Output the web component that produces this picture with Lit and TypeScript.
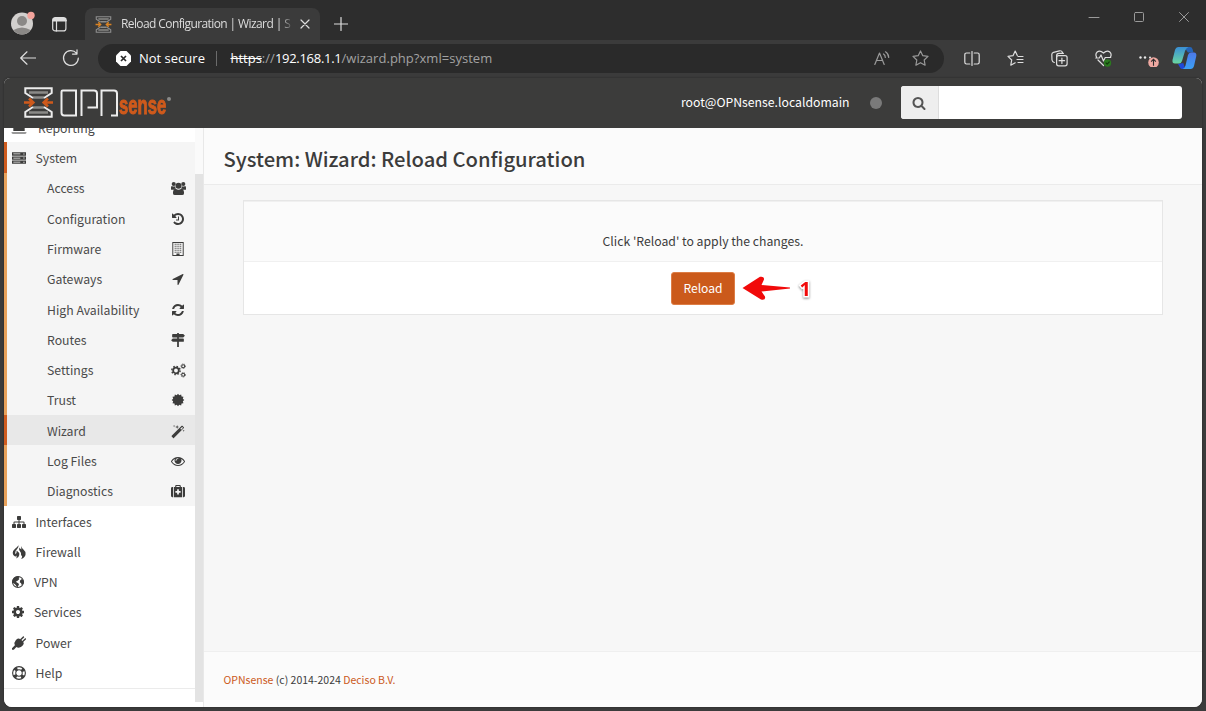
import { LitElement, html, css, svg, TemplateResult } from "lit";
import { customElement, property } from "lit/decorators.js";

const gear = (cx: number, cy: number, r: number, w: number, n: number) => {
  const R = r + w * 0.75;
  const on = (2 * Math.PI * (r + w)) / n / 2.3;
  return svg`<circle cx=${cx} cy=${cy} r=${r} fill="none" stroke="currentColor" stroke-width=${w}/>
  <circle cx=${cx} cy=${cy} r=${R} fill="none" stroke="currentColor" stroke-width=${w * 0.8} stroke-dasharray=${`${on} ${(2 * Math.PI * R) / n - on}`}/>`;
};
const burst = (n: number, R: number, r: number) =>
  Array.from({ length: n * 2 }, (_, i) => {
    const a = (i * Math.PI) / n;
    const q = i % 2 ? r : R;
    return `${(8 + q * Math.sin(a)).toFixed(2)},${(8 - q * Math.cos(a)).toFixed(2)}`;
  }).join(" ");

const fa = (d: string) => svg`<path transform="scale(.0089286)" d=${d}/>`;

const GLYPHS: Record<string, TemplateResult> = {
  search: fa("M1216 832q0-185-131.5-316.5t-316.5-131.5-316.5 131.5-131.5 316.5 131.5 316.5 316.5 131.5 316.5-131.5 131.5-316.5zm512 832q0 52-38 90t-90 38q-54 0-90-38l-343-342q-179 124-399 124-143 0-273.5-55.5t-225-150-150-225-55.5-273.5 55.5-273.5 150-225 225-150 273.5-55.5 273.5 55.5 225 150 150 225 55.5 273.5q0 220-124 399l343 343q37 37 37 90z"),
  refresh: fa("M1639 1056q0 5-1 7-64 268-268 434.5t-478 166.5q-146 0-282.5-55t-243.5-157l-129 129q-19 19-45 19t-45-19-19-45v-448q0-26 19-45t45-19h448q26 0 45 19t19 45-19 45l-137 137q71 66 161 102t187 36q134 0 250-65t186-179q11-17 53-117 8-23 30-23h192q13 0 22.5 9.5t9.5 22.5zm25-800v448q0 26-19 45t-45 19h-448q-26 0-45-19t-19-45 19-45l138-138q-148-137-349-137-134 0-250 65t-186 179q-11 17-53 117-8 23-30 23h-199q-13 0-22.5-9.5t-9.5-22.5v-7q65-268 270-434.5t480-166.5q146 0 284 55.5t245 156.5l130-129q19-19 45-19t45 19 19 45z"),
  history: fa("M1664 896q0 156-61 298t-164 245-245 164-298 61q-172 0-327-72.5t-264-204.5q-7-10-6.5-22.5t8.5-20.5l137-138q10-9 25-9 16 2 23 12 73 95 179 147t225 52q104 0 198.5-40.5t163.5-109.5 109.5-163.5 40.5-198.5-40.5-198.5-109.5-163.5-163.5-109.5-198.5-40.5q-98 0-188 35.5t-160 101.5l137 138q31 30 14 69-17 40-59 40h-448q-26 0-45-19t-19-45v-448q0-42 40-59 39-17 69 14l130 129q107-101 244.5-156.5t284.5-55.5q156 0 298 61t245 164 164 245 61 298zm-640-288v448q0 14-9 23t-23 9h-320q-14 0-23-9t-9-23v-64q0-14 9-23t23-9h224v-352q0-14 9-23t23-9h64q14 0 23 9t9 23z"),
  arrow: fa("M1593 349l-640 1280q-17 35-57 35-5 0-15-2-22-5-35.5-22.5t-13.5-39.5v-576h-576q-22 0-39.5-13.5t-22.5-35.5 4-42 29-30l1280-640q13-7 29-7 27 0 45 19 15 14 18.5 34.5t-6.5 39.5z"),
  cog: fa("M1152 896q0-106-75-181t-181-75-181 75-75 181 75 181 181 75 181-75 75-181zm512-109v222q0 12-8 23t-20 13l-185 28q-19 54-39 91 35 50 107 138 10 12 10 25t-9 23q-27 37-99 108t-94 71q-12 0-26-9l-138-108q-44 23-91 38-16 136-29 186-7 28-36 28h-222q-14 0-24.5-8.500t-11.500-21.500l-28-184q-49-16-90-37l-141 107q-10 9-25 9-14 0-25-11-126-114-165-168-7-10-7-23 0-12 8-23 15-21 51-66.500t54-70.500q-27-50-41-99l-183-27q-13-2-21-12.500t-8-23.500v-222q0-12 8-23t19-13l186-28q14-46 39-92-40-57-107-138-10-12-10-24 0-10 9-23 26-36 98.500-107.500t94.500-71.500q13 0 26 10l138 107q44-23 91-38 16-136 29-186 7-28 36-28h222q14 0 24.500 8.500t11.500 21.500l28 184q49 16 90 37l142-107q9-9 24-9 13 0 25 10 129 119 165 170 7 8 7 22 0 12-8 23-15 21-51 66.500t-54 70.500q26 50 41 98l183 28q13 2 21 12.500t8 23.500z"),
  eye: fa("M1664 960q-152-236-381-353 61 104 61 225 0 185-131.5 316.5t-316.5 131.5-316.5-131.5-131.5-316.5q0-121 61-225-229 117-381 353 133 205 333.5 326.5t434.500 121.500 434.500-121.500 333.500-326.500zm-720-384q0-20-14-34t-34-14q-125 0-214.500 89.500t-89.500 214.500q0 20 14 34t34 14 34-14 14-34q0-86 61-147t147-61q20 0 34-14t14-34zm848 384q0 34-20 69-140 230-376.500 368.500t-499.500 138.500-499.500-139-376.500-368q-20-35-20-69t20-69q140-229 376.500-368t499.500-139 499.500 139 376.500 368q20 35 20 69z"),
  sitemap: fa("M1792 1248v320q0 40-28 68t-68 28h-320q-40 0-68-28t-28-68v-320q0-40 28-68t68-28h96v-192h-512v192h96q40 0 68 28t28 68v320q0 40-28 68t-68 28h-320q-40 0-68-28t-28-68v-320q0-40 28-68t68-28h96v-192h-512v192h96q40 0 68 28t28 68v320q0 40-28 68t-68 28h-320q-40 0-68-28t-28-68v-320q0-40 28-68t68-28h96v-192q0-52 38-90t90-38h512v-192h-96q-40 0-68-28t-28-68v-320q0-40 28-68t68-28h320q40 0 68 28t28 68v320q0 40-28 68t-68 28h-96v192h512q52 0 90 38t38 90v192h96q40 0 68 28t28 68z"),
  laptop: svg`<path d="M2.500 2h11a1 1 0 0 1 1 1v8.500h-13V3a1 1 0 0 1 1-1z"/><path d="M-.5 12.500h17v1q0 1.300-1.500 1.300H1q-1.500 0-1.500-1.300z" fill="#999"/>`,
  server: svg`<path fill-rule="evenodd" d="M0 1.500h16v3.800H0zM0 6.200h16v3.800H0zM0 10.900h16v3.800H0zM1.500 2.900v.9h8v-.9zM1.500 7.600v.9h8v-.9zM1.500 12.300v.9h8v-.9zM13 2.800v1.100h1.300V2.800zM13 7.500v1.100h1.300V7.500zM13 12.200v1.100h1.300v-1.100z"/>`,
  users: svg`<circle cx="2.900" cy="3.200" r="2.200"/><circle cx="13.100" cy="3.200" r="2.200"/><circle cx="8" cy="5" r="3.200"/><path d="M0 9V7.200Q0 5.200 1.300 5.500q1.600.8 3 .2Q4.600 7.200 5.200 8q-1.400 0-2.300 1.400H1Q0 9.400 0 9zM16 9V7.200q0-2-1.300-1.700-1.600.8-3 .2-.3 1.500-.9 2.300 1.400 0 2.300 1.400H15q1 0 1-.4zM2.100 13q0-4.500 2.900-4.700Q8 10.500 11 8.300q2.900.2 2.900 4.700 0 2-2.100 2H4.200Q2.100 15 2.100 13z"/>`,
  building: svg`<path fill-rule="evenodd" d="M1.500 0h13v16h-13zM2.600 1.100v13.800h3.600V13h3.600v1.900h3.600V1.100z"/><path d="M4.200 2.600h8M4.200 4.900h8M4.200 7.200h8M4.200 9.500h8M4.200 11.800h8" stroke="currentColor" stroke-width="1.200" stroke-dasharray="1.200 .9"/>`,
  signs: svg`<path d="M7 0h2v1.200h5l1.900 1.900L14 5H2.200q-.9 0-.9-.8V2q0-.8.900-.8H7zM7 5h2v1.300h4.800q.9 0 .9.800v2.200q0 .8-.9.800H2L.1 8.200 2 6.300h5zM7 10h2v6H7z"/>`,
  cogs: svg`${gear(5.300, 8, 3, 1.900, 8)}${gear(13, 3.400, 1.600, 1.100, 7)}${gear(13, 12.600, 1.600, 1.100, 7)}`,
  cert: svg`<polygon points=${burst(12, 7.200, 5.700)}/>`,
  magic: svg`<path fill-rule="evenodd" d="M.8 13.500 12.200 2.100q.4-.4.9 0l1.600 1.600q.4.400 0 .9L3.300 16q-.4.400-.9 0L.8 14.400q-.4-.4 0-.9zM10.600 5.400l1.100 1.100 2.100-2.100-1.100-1.100z"/><path d="M3.500 1l.3 1 1 .3-1 .3-.3 1-.3-1-1-.3 1-.3zM7 1.200l.5 1.700 1.700.5-1.700.5L7 5.600l-.5-1.700-1.700-.5 1.700-.5zM14.500 6.500l.3 1 1 .3-1 .3-.3 1-.3-1-1-.3 1-.3z"/>`,
  medkit: svg`<path fill-rule="evenodd" d="M3.200 3.500h1.600V2.300Q4.800 1 6 1h4q1.200 0 1.200 1.300v1.200h1.600v11.500H3.200zM6.100 2.300v1.200h3.800V2.300zM7 6v2H5v2h2v2h2v-2h2V8H9V6zM0 5q0-1.500 1.500-1.500h.8v11.500h-.8Q0 15 0 13.500zM16 5q0-1.500-1.500-1.500h-.8v11.500h.8q1.500 0 1.500-1.500z"/>`,
  fire: svg`<path d="M7.300.3C8 3.300 5 4.900 4 7.300Q3.300 9 4 10.500 5.600 9 5.300 6.200 8.600 8.200 8.300 11.500 8 14.200 4.800 15.300q1-1.800.2-3.300l-1.200 1.500Q.8 12.300.8 9.200.8 6.500 3.500 4.300 6.300 2.500 7.300.3zM10.500 1.200q.2 2 2.300 3.600Q15.800 7.200 15.500 10.600 15.200 14.400 10.500 16q1.600-2.300.9-4.500l-1 1.300Q10.800 8 8.200 5.600 8 4 8.600 2.800q.8 1.600 2.300 2.400-.8-2-.4-4z"/>`,
  globe: svg`<circle cx="8" cy="8" r="6.300" fill="none" stroke="currentColor" stroke-width="1.200"/><path d="M1.500 6Q3.500 1.500 8 1.300l2.200.9-1.500 1.300.9 1.200L7.500 6.500 5.500 7.800l1.800 1.100 1.900 1.300-.8 2-1.400 2.300Q6 12 4.800 10.800 3.500 9.500 1.800 9zM10.500 6l2-1.500 1.900 1.800.2 3-2.200 2.500-.9-2.400-1.500-1.200z"/>`,
  plug: svg`<path d="M9.700 3.700 12.900.5q1.300-.4 1.500.9L11.200 4.700l1 1 3.200-3.200q1.300-.2 1.100 1.100L13.200 6.900q1.800 1.900-1.400 4.700-3.100 2.700-6.400 1.100L2.500 15.800H.4v-1.900l3.300-3.300Q2.300 7.300 4.900 4.500 8 1.800 9.700 3.700z" transform="translate(-.4 0)"/>`,
  ring: svg`<circle cx="8" cy="8" r="7.300" fill="none" stroke="currentColor" stroke-width="1.300"/><circle cx="8" cy="8" r="3.700" fill="none" stroke="currentColor" stroke-width="1.200"/><circle cx="8" cy="8" r="5.400" fill="none" stroke="currentColor" stroke-width="3.600" stroke-dasharray="3.400 5.082" stroke-dashoffset="-2.540"/>`,
};

@customElement("fa-icon")
class FaIcon extends LitElement {
  @property() name = "";
  @property({ type: Number }) size = 14;
  static styles = css`
    :host { display: inline-flex; }
    .g { fill: currentColor; overflow: visible; }
  `;
  render() {
    return html`<svg class="g" width=${this.size} height=${this.size} viewBox="0 0 16 16">${GLYPHS[this.name]}</svg>`;
  }
}

/* Hourglass mark shared by the favicon and the header logo. */
const mark = (w: number, h: number, line = "#ececec", accent = "#cf5a1c") => html`<svg width=${w} height=${h} viewBox="0 0 29 31">
  <path d="M5 5.500h19M9 10.500h11M9 20.500h11M5 25.500h19" stroke="#8a8a88" stroke-width="2.600" fill="none"/>
  <path d="M9 11L1.300 6V1.300h26.400V6L20 11M9 20L1.300 25v4.700h26.400V25L20 20" fill="none" stroke=${line} stroke-width="2"/>
  <path d="M0 15.500h8.500M5 11.500l4.300 4L5 19.500M29 15.500h-8.500M24 11.500l-4.300 4 4.300 4" fill="none" stroke=${accent} stroke-width="2.600"/>
</svg>`;

@customElement("browser-chrome")
class BrowserChrome extends LitElement {
  static styles = css`
    :host { display: block; height: 78px; background: #2d2d2d; color: #e6e6e6; font-family: "Open Sans", sans-serif; }
    svg { display: block; flex: none; }
    .tabs { height: 40px; display: flex; align-items: flex-end; }
    .avatar { margin: 0 0 4px 10px; }
    .workspace { margin: 0 0 8.500px 16px; }
    .tab { margin-left: 18px; width: 235px; height: 32px; box-sizing: border-box; padding-left: 10px; background: #3b3b3b; border-radius: 8px 8px 0 0; display: flex; align-items: center; }
    .title { margin-left: 9px; width: 171px; overflow: hidden; white-space: nowrap; font-size: 12px; letter-spacing: -0.600px; padding-bottom: 2px; color: #dcdcdc; mask-image: linear-gradient(90deg, #000 93%, transparent 101%); }
    .close { margin-left: 7.500px; }
    .plus { margin: 0 0 9.500px 14px; }
    .controls { margin: 0 16px 18.500px auto; display: flex; gap: 33px; }
    .bar { height: 38px; background: #3b3b3b; display: flex; align-items: center; box-sizing: border-box; padding-bottom: 2px; }
    .back { margin-left: 20px; }
    .reload { margin-left: 26px; }
    .address { margin-left: 18px; width: 846px; height: 29px; margin-top: 1px; border-radius: 15px; background: #2a2a2a; display: flex; align-items: center; font-size: 13px; line-height: 27px; box-sizing: border-box; padding-bottom: 1px; }
    .warn { margin-left: 18px; }
    .label { margin-left: 8px; color: #fff; letter-spacing: 0; }
    .sep { width: 1px; height: 15px; background: #6b6b6b; margin: 0 13px 0 11.500px; }
    .url { color: #a2a2a2; white-space: nowrap; letter-spacing: .030px; }
    .strike { color: #fff; text-decoration: line-through; letter-spacing: 0; }
    .host { color: #fff; letter-spacing: -0.280px; }
    .read { margin-left: auto; }
    .star { margin: 0 15.500px 0 22px; }
    .tools { display: flex; align-items: center; margin-left: 19.500px; gap: 27px; }
    .copilot { margin-left: 12.500px; }
    .ico { fill: none; stroke: #dedede; stroke-width: 1.200; stroke-linejoin: round; stroke-linecap: round; }
    .dim { stroke: #9a9a9a; }
  `;
  render() {
    return html`
      <div class="tabs">
        <svg class="avatar" width="26" height="26" viewBox="0 0 26 26"><circle cx="12" cy="13.500" r="11" fill="#d2d0ce"/><circle cx="12" cy="11" r="5" fill="#8a8886"/><path d="M3.500 20q8.500-5 17 0Q17 24.500 12 24.500T3.500 20z" fill="#8a8886"/><circle cx="21" cy="5.500" r="3.700" fill="#f3a39b"/></svg>
        <svg class="workspace ico" width="15" height="15" viewBox="0 0 15 15"><rect x=".7" y=".7" width="13.200" height="13.200" rx="2.500"/><path d="M1.500 2h12M1 3.500h13" stroke-width="1.800"/><path d="M4.500 4v10"/></svg>
        <div class="tab">
          ${mark(17, 17, "#8f8f8f", "#d98324")}
          <span class="title">Reload Configuration | Wizard | S</span>
          <svg class="close ico" width="10" height="10" viewBox="0 0 10 10"><path d="M1 1l8 8M9 1L1 9"/></svg>
        </div>
        <svg class="plus ico" width="14" height="14" viewBox="0 0 14 14"><path d="M7 .5v13M.5 7h13"/></svg>
        <div class="controls">
          <svg class="ico dim" width="12" height="12" viewBox="0 0 12 12"><path d="M1 7.500h10" stroke-width="1"/></svg>
          <svg class="ico dim" width="12" height="12" viewBox="0 0 12 12"><rect x="1.500" y="2.500" width="9" height="9" rx="1" stroke-width="1"/></svg>
          <svg class="ico dim" width="12" height="12" viewBox="0 0 12 12"><path d="M1.500 2.500l9 9M10.500 2.500l-9 9" stroke-width="1"/></svg>
        </div>
      </div>
      <div class="bar">
        <svg class="back ico" width="16" height="14" viewBox="0 0 16 14"><path d="M15.500 7H.8M7 .8L.7 7 7 13.200"/></svg>
        <svg class="reload ico" width="18" height="18" viewBox="0 0 18 18"><path d="M16.300 9A7.400 7.400 0 1 1 14.600 4.300M15 .8v4.300h-4.500"/></svg>
        <div class="address">
          <svg class="warn" width="15" height="15" viewBox="0 0 15 15"><path d="M4.500 0h6L15 4.500v6L10.500 15h-6L0 10.500v-6z" fill="#fff"/><path d="M5 5l5 5M10 5l-5 5" stroke="#2a2a2a" stroke-width="1.700"/></svg>
          <span class="label">Not secure</span><span class="sep"></span>
          <span class="url"><span class="strike">https</span>://<span class="host">192.168.1.1</span>/wizard.php?xml=system</span>
          <svg class="read ico dim" width="16" height="15" viewBox="0 0 16 15"><path d="M.8 13.500L5.500 2l4.700 11.500M2.500 9.500h6M9.500 3q1.800 1 1.800 3.500M11.500.8q3.200 2 3.200 5.700"/></svg>
          <svg class="star ico dim" width="17" height="16" viewBox="0 0 17 16"><path d="M8.500 1l2.300 4.700 5.200.7-3.800 3.600.9 5.200-4.600-2.500-4.600 2.500.9-5.200L1 6.400l5.200-.7z"/></svg>
        </div>
        <div class="tools">
          <svg class="ico" width="16" height="15" viewBox="0 0 16 15"><path d="M5.800 2H2.500Q.8 2 .8 3.700v7.600Q.8 13 2.500 13h3.300M10.200 2h3.300q1.700 0 1.700 1.700v7.600q0 1.700-1.700 1.700h-3.300M8 .5v14"/></svg>
          <svg class="ico" width="17" height="16" viewBox="0 0 17 16"><path d="M10.300 5.500L8.200 1 6 5.700 1 6.400l3.700 3.600-.9 5.200 4.400-2.400M11 6.500h5M10 9.500h6M11 12.500h5"/></svg>
          <svg class="ico" width="17" height="17" viewBox="0 0 17 17"><rect x="5.600" y="5.600" width="10.500" height="10.200" rx="2"/><path d="M10.900 8v5.500M8.100 10.700h5.500M3.300 12.500Q1.300 12 1 10L.8 4.500Q.8 2.700 2.500 2.300L8.500.8q2.300-.3 3 1.700M5.600 10V5.800Q5.600 3.300 8 3.300h4.500"/></svg>
          <svg class="ico" width="17" height="17" viewBox="0 0 17 17"><path d="M1.500 7Q0 4 2.200 2 5-.2 8.500 3 12-.2 14.800 2 17 4 15.500 7M3 10l5.500 5.500M.8 8h3.500l1.700-3 2.500 6 1.700-3.500h5.500"/><circle cx="12.500" cy="13" r="3.700" fill="#2b7a1f" stroke="none"/><path d="M11 13l1.200 1.200 2-2.200" stroke="#123c0d"/></svg>
          <svg width="21" height="18" viewBox="0 0 21 18"><g fill="#e8e8e8"><circle cx="1.500" cy="8.500" r="1.200"/><circle cx="6" cy="8.500" r="1.200"/><circle cx="11" cy="8.500" r="1"/></g><circle cx="14.500" cy="13.500" r="5.300" fill="#efa9a2"/><path d="M14.500 16.700v-6.200M12.100 12.700l2.400-2.400 2.400 2.400" fill="none" stroke="#2d2d2d" stroke-width="1.100"/></svg>
        </div>
        <svg class="copilot" width="25" height="24" viewBox="0 0 25 24">
          <defs><linearGradient id="a" x1="0" y1="0" x2="0" y2="1"><stop offset="0" stop-color="#3a8fd6"/><stop offset="1" stop-color="#6ad6a0"/></linearGradient><linearGradient id="b" x1="0" y1="1" x2="0" y2="0"><stop offset="0" stop-color="#3ba0f5"/><stop offset="1" stop-color="#4d78e8"/></linearGradient></defs>
          <path d="M12 1h6q2 0 2.500 2l1 3.500H16z" fill="#2464b8"/>
          <path d="M6 18l2 3.500q.7 1.500 2.300 1.500h3l-2-6z" fill="#1f49d8"/>
          <path d="M6.500 1h10q-2.500 1-3.500 4l-3 10q-1 2.500-3 2.500H3q-3 0-2.500-3.500L3 4q1-3 3.500-3z" fill="url(#a)"/>
          <path d="M18.500 23h-8q2.200-.5 3-3.500L16 9q.8-2.500 3-2.500h3q2.800 0 2.300 3.500L22 20q-.8 3-3.500 3z" fill="url(#b)"/>
        </svg>
      </div>`;
  }
}

interface Item { label: string; icon: string; cls?: string; size?: number; }
const SUB: Item[] = [
  { label: "Access", icon: "users", size: 15 }, { label: "Configuration", icon: "history" },
  { label: "Firmware", icon: "building" }, { label: "Gateways", icon: "arrow" },
  { label: "High Availability", icon: "refresh" }, { label: "Routes", icon: "signs" },
  { label: "Settings", icon: "cogs", size: 15 }, { label: "Trust", icon: "cert" },
  { label: "Wizard", icon: "magic", cls: "active" }, { label: "Log Files", icon: "eye" },
  { label: "Diagnostics", icon: "medkit" },
];
const REST: Item[] = [
  { label: "Interfaces", icon: "sitemap" }, { label: "Firewall", icon: "fire" },
  { label: "VPN", icon: "globe", cls: "tight" }, { label: "Services", icon: "cog", cls: "tight" },
  { label: "Power", icon: "plug" }, { label: "Help", icon: "ring" },
];

@customElement("side-menu")
class SideMenu extends LitElement {
  static styles = css`
    :host { display: flex; width: 199px; background: #fff; color: #4a4a4a; font-size: 12.250px; border-right: 1px solid #e8e8e8; }
    .menu { width: 191px; overflow: hidden; }
    .row { height: 30.300px; display: flex; align-items: center; box-sizing: border-box; padding: 1.200px 0 0 8px; white-space: nowrap; }
    .row fa-icon { color: #3c3c3b; }
    .text { margin-left: 9.500px; }
    .tight { padding-left: 7px; }
    .tight .text { margin-left: 9px; }
    .cut { margin-top: -16px; }
    .cut .text { margin-left: 12px; }
    .top { background: #f5f5f5; border-left: 3px solid #cf5c1f; padding-left: 5px; }
    .group { background: #f5f5f5; }
    .sub { border-left: 3px solid #e8a25b; padding: 1.200px 9px 0 40px; justify-content: space-between; }
    .slot { width: 16px; display: flex; justify-content: center; }
    .active { background: #e8e8e8; border-left-color: #cf5c1f; }
    .end { border-bottom: 1px solid #ebebeb; padding-bottom: .5px; }
    .track { width: 8px; background: #fafafa; display: flex; flex-direction: column; }
    .gap { height: 46px; }
    .thumb { height: 528px; background: #e3e3e3; }
    .foot { flex: 1; background: #fff; }
  `;
  render() {
    return html`
      <div class="menu">
        <div class="row cut"><fa-icon name="laptop"></fa-icon><span class="text">Reporting</span></div>
        <div class="row top"><fa-icon name="server"></fa-icon><span class="text">System</span></div>
        <div class="group">${SUB.map((i) => html`<div class="row sub ${i.cls ?? ""}"><span>${i.label}</span><span class="slot"><fa-icon name=${i.icon} size=${i.size ?? 14}></fa-icon></span></div>`)}</div>
        <div class="end">${REST.map((i) => html`<div class="row ${i.cls ?? ""}"><fa-icon name=${i.icon}></fa-icon><span class="text">${i.label}</span></div>`)}</div>
      </div>
      <div class="track"><div class="gap"></div><div class="thumb"></div><div class="foot"></div></div>`;
  }
}

@customElement("app-root")
class AppRoot extends LitElement {
  static styles = css`
    :host { display: block; width: 1206px; height: 711px; overflow: hidden; background: #3b3b3b; font-family: "Noto Sans CJK SC", sans-serif; color: #3c3c3b; }
    .page { margin: 0 4px; width: 1198px; height: 629px; border-radius: 6px 6px 8px 8px; overflow: hidden; display: flex; flex-direction: column; background: #f7f7f7; box-shadow: 0 0 2px #222; }
    .head { height: 50px; flex: none; background: #3c3c3b; display: flex; align-items: center; box-sizing: border-box; padding-bottom: 1px; }
    .mark { margin-left: 20px; display: flex; }
    .opn { margin-left: 6.500px; }
    .sense { font-family: "Liberation Sans", sans-serif; font-weight: 700; font-size: 26px; line-height: 30px; color: #cf5a1c; display: inline-block; transform: scaleX(.64); transform-origin: 0 50%; width: 50px; margin: 5px 0 0 1px; -webkit-text-stroke: 1px #cf5a1c; }
    .reg { width: 4px; height: 4px; border-radius: 50%; background: #8a8a88; margin: 0 0 7px -2px; }
    .user { margin: 0 0 1px auto; font-size: 12.250px; color: #fff; }
    .dot { width: 12px; height: 12px; border-radius: 50%; background: #7a7a7a; margin: 0 19px 0 20px; }
    .search { width: 281.500px; height: 33px; margin-right: 20px; background: #fff; border-radius: 3px; display: flex; overflow: hidden; }
    .lens { width: 37px; background: #eee; border-right: 1px solid #ddd; display: flex; align-items: center; justify-content: center; color: #555; }
    .body { flex: 1; display: flex; min-height: 0; }
    .main { flex: 1; display: flex; flex-direction: column; }
    .title { height: 57px; box-sizing: border-box; padding-left: 19.500px; background: #fbfbfb; border-bottom: 1px solid #ebebeb; display: flex; align-items: center; }
    .title h1 { margin: 0; padding-top: 7px; font-size: 20.220px; font-weight: 500; line-height: 1; }
    .card { margin: 15px 39px 0; height: 115px; box-sizing: border-box; border: 1px solid #e6e6e6; background: #fff; display: flex; flex-direction: column; }
    .msg { height: 61px; box-sizing: border-box; background: #fbfbfb; border-top: 1px solid #f0f0f0; border-bottom: 1px solid #f0f0f0; text-align: center; padding-top: 29px; font-size: 12.240px; line-height: 20px; }
    .act { flex: 1; display: flex; justify-content: center; align-items: center; position: relative; }
    .btn { width: 64px; height: 33px; border: 1px solid #dd7d45; border-radius: 3px; background: #cb5a1b; color: #fff; font: inherit; font-size: 12.100px; padding: 0 0 1px; }
    .note { position: absolute; left: 495.500px; top: 11px; }
    .foot { margin-top: auto; height: 56px; box-sizing: border-box; border-top: 1px solid #efefef; background: #fbfbfb; padding-left: 19.500px; display: flex; align-items: center; font-size: 10.500px; white-space: pre; }
    .link { color: #cb5a1b; }
    .num { font: 700 20px "Open Sans", sans-serif; fill: #f10a0a; stroke: #fff; stroke-width: 3px; paint-order: stroke; filter: drop-shadow(0 1px 1px #888); }
  `;
  render() {
    return html`
      <browser-chrome></browser-chrome>
      <div class="page">
        <header class="head">
          <span class="mark">${mark(29, 31)}</span>
          <svg class="opn" width="58" height="28" viewBox="0 0 58 28"><path d="M2.800 1.500H16V26.500H4.200Q1.500 26.500 1.500 23.800V2.800Q1.500 1.500 2.800 1.500zM21.500 27V1.500H34q3 0 3 3V18.500H27.500M41.500 27V1.500H54q3 0 3 3V26.500H51" fill="none" stroke="#ececec" stroke-width="2"/></svg>
          <span class="sense">sense</span><span class="reg"></span>
          <span class="user">root@OPNsense.localdomain</span>
          <span class="dot"></span>
          <div class="search"><span class="lens"><fa-icon name="search"></fa-icon></span></div>
        </header>
        <div class="body">
          <side-menu></side-menu>
          <main class="main">
            <div class="title"><h1>System: Wizard: Reload Configuration</h1></div>
            <section class="card">
              <div class="msg">Click 'Reload' to apply the changes.</div>
              <div class="act">
                <button class="btn">Reload</button>
                <svg class="note" width="76" height="32" viewBox="0 0 76 32">
                  <path d="M2.500 15L20 3.800Q24.500 3 24 6.500L21.500 12 50 14.500V15.500L21.500 18.500 25 23.500Q26 27.500 21 26.500z" fill="#f10a0a"/>
                  <text class="num" x="59.500" y="22.500">1</text>
                </svg>
              </div>
            </section>
            <footer class="foot"><span><span class="link">OPNsense</span> (c) 2014-2024 <span class="link">Deciso B.V.</span></span></footer>
          </main>
        </div>
      </div>`;
  }
}
